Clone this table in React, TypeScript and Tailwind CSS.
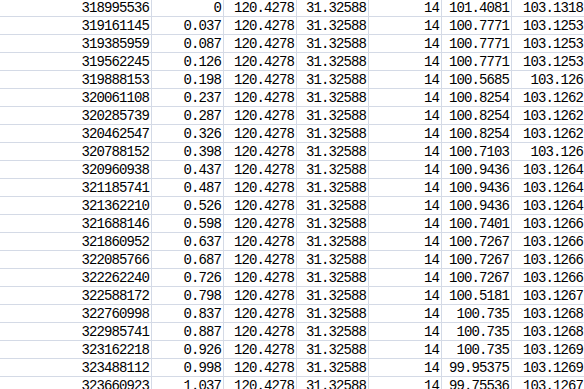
import React from "react";

const rows: string[][] = [
  ["318995536", "0", "101.4081", "103.1318"],
  ["319161145", "0.037", "100.7771", "103.1253"],
  ["319385959", "0.087", "100.7771", "103.1253"],
  ["319562245", "0.126", "100.7771", "103.1253"],
  ["319888153", "0.198", "100.5685", "103.126"],
  ["320061108", "0.237", "100.8254", "103.1262"],
  ["320285739", "0.287", "100.8254", "103.1262"],
  ["320462547", "0.326", "100.8254", "103.1262"],
  ["320788152", "0.398", "100.7103", "103.126"],
  ["320960938", "0.437", "100.9436", "103.1264"],
  ["321185741", "0.487", "100.9436", "103.1264"],
  ["321362210", "0.526", "100.9436", "103.1264"],
  ["321688146", "0.598", "100.7401", "103.1266"],
  ["321860952", "0.637", "100.7267", "103.1266"],
  ["322085766", "0.687", "100.7267", "103.1266"],
  ["322262240", "0.726", "100.7267", "103.1266"],
  ["322588172", "0.798", "100.5181", "103.1267"],
  ["322760998", "0.837", "100.735", "103.1268"],
  ["322985741", "0.887", "100.735", "103.1268"],
  ["323162218", "0.926", "100.735", "103.1269"],
  ["323488112", "0.998", "99.95375", "103.1269"],
  ["323660923", "1.037", "99.75536", "103.1267"],
];

const cell =
  "shrink-0 h-full border-r border-[#d4dae6] text-right pr-[2px] whitespace-nowrap overflow-hidden";

export default function App() {
  return (
    <div className="w-[584px] h-[389px] overflow-hidden bg-white">
      <div
        className="-mt-[1px] text-black text-[14px] leading-[18px] tracking-[-0.9px]"
        style={{ fontFamily: '"Liberation Mono", "DejaVu Sans Mono", monospace' }}
      >
        {rows.map((r, i) => (
          <div key={i} className="flex h-[18px] border-b border-[#d4dae6] w-[600px]">
            <div className={`${cell} w-[152px]`}>{r[0]}</div>
            <div className={`${cell} w-[72px]`}>{r[1]}</div>
            <div className={`${cell} w-[73px]`}>120.4278</div>
            <div className={`${cell} w-[72px]`}>31.32588</div>
            <div className={`${cell} w-[73px]`}>14</div>
            <div className={`${cell} w-[70px]`}>{r[2]}</div>
            <div className={`${cell} w-[74px]`}>{r[3]}</div>
          </div>
        ))}
      </div>
    </div>
  );
}
